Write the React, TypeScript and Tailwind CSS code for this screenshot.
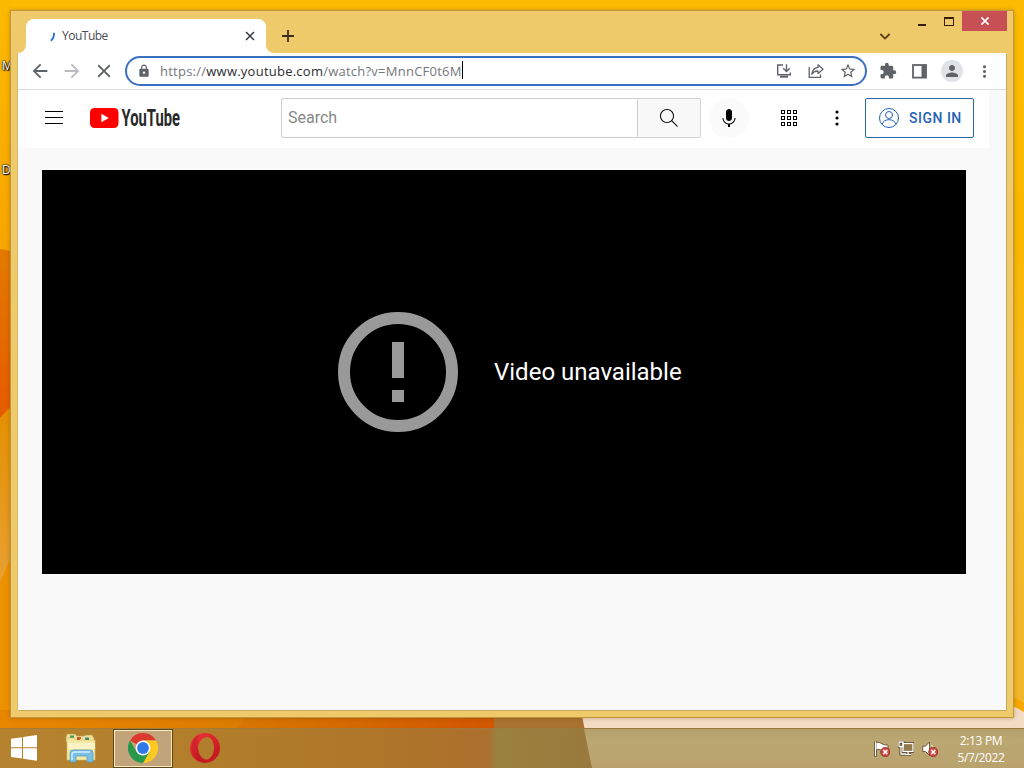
import React from 'react';
import {
  MdArrowBack,
  MdArrowForward,
  MdClose,
  MdExtension,
  MdLock,
  MdMoreVert,
  MdPerson,
  MdStarBorder,
} from 'react-icons/md';

const Wallpaper: React.FC = () => (
  <svg className="absolute inset-0" width="1024" height="768" viewBox="0 0 1024 768">
    <defs>
      <linearGradient id="sky" x1="0" y1="0" x2="0" y2="1">
        <stop offset="0" stopColor="#fdbc02" />
        <stop offset="0.3" stopColor="#fbb800" />
        <stop offset="0.6" stopColor="#f3bb2c" />
        <stop offset="1" stopColor="#f0b428" />
      </linearGradient>
      <linearGradient id="leftTop" x1="0" y1="0" x2="0" y2="1">
        <stop offset="0" stopColor="#fdba02" />
        <stop offset="1" stopColor="#f7a500" />
      </linearGradient>
      <linearGradient id="ember" x1="0" y1="0" x2="0" y2="1">
        <stop offset="0" stopColor="#e37a00" />
        <stop offset="1" stopColor="#e65a00" />
      </linearGradient>
      <linearGradient id="dune" x1="0" y1="0" x2="0" y2="1">
        <stop offset="0" stopColor="#e49000" />
        <stop offset="1" stopColor="#e9a136" />
      </linearGradient>
      <linearGradient id="floor" x1="0" y1="0" x2="1" y2="0">
        <stop offset="0" stopColor="#e88600" />
        <stop offset="0.5" stopColor="#da7c00" />
        <stop offset="1" stopColor="#d14c00" />
      </linearGradient>
    </defs>
    <rect width="1024" height="768" fill="url(#sky)" />
    <rect width="12" height="250" fill="url(#leftTop)" />
    <path d="M0 249L12 251V420H0Z" fill="url(#ember)" />
    <path d="M0 418L12 405V600H0Z" fill="url(#dune)" />
    <path d="M0 582L12 555V720H0Z" fill="#ee9100" />
    <rect y="710" width="494" height="58" fill="url(#floor)" />
    <path d="M247 717H494V768H200Z" fill="#d26a00" opacity="0.35" />
    <path d="M494 710H582L592 768H494Z" fill="#a97230" />
    <path d="M581 710L1013 704L1024 711V768H592Z" fill="#f3dcc4" />
    <path d="M1013 696L1024 703V712L1013 706Z" fill="#f6a800" />
  </svg>
);

const TabStrip: React.FC = () => (
  <div className="flex h-[42px]">
    <div className="relative mt-2 ml-2 flex h-[34px] w-[240px] items-center rounded-t-lg bg-white">
      <svg className="absolute -left-2 bottom-0" width="8" height="8" viewBox="0 0 8 8">
        <path d="M8 0V8H0A8 8 0 0 0 8 0Z" fill="#fff" />
      </svg>
      <svg className="absolute -right-2 bottom-0" width="8" height="8" viewBox="0 0 8 8">
        <path d="M0 0V8H8A8 8 0 0 1 0 0Z" fill="#fff" />
      </svg>
      <svg className="ml-6 shrink-0" width="6" height="12" viewBox="0 0 6 12">
        <path d="M4 1.8Q4.4 6.8 0.8 9.8" transform="translate(0 1)" fill="none" stroke="#2f6fd0" strokeWidth="1.8" />
      </svg>
      <span className="ml-1.5 text-[12px] tracking-[-0.5px] text-[#4a4d51]">YouTube</span>
      <svg className="mr-[11px] ml-auto shrink-0" width="10" height="10" viewBox="0 0 10 10">
        <path d="M1 1L9 9M9 1L1 9" stroke="#3c4043" strokeWidth="1.6" />
      </svg>
    </div>
    <svg className="mt-[19px] ml-4" width="12" height="12" viewBox="0 0 12 12">
      <path d="M6 0V12M0 6H12" stroke="#3b2f1c" strokeWidth="1.8" />
    </svg>
    <svg className="mt-[22px] ml-[585px]" width="12" height="8" viewBox="0 0 12 8">
      <path d="M1.4 1L6 5.6L10.6 1" fill="none" stroke="#5a3d16" strokeWidth="1.8" />
    </svg>
    <div className="-mr-px ml-auto flex h-5 items-center">
      <div className="mt-[7px] mr-[18px] h-[2px] w-2 bg-[#3a1d05]"></div>
      <div className="mr-[8px] h-[9px] w-[10px] border border-t-2 border-[#3a1d05]"></div>
      <div className="flex h-5 w-[45px] items-center justify-center bg-[#c75054]">
        <svg width="10" height="8" viewBox="0 0 10 8">
          <path d="M1.4 0.4L8.6 7.6M8.6 0.4L1.4 7.6" stroke="#fff" strokeWidth="1.7" />
        </svg>
      </div>
    </div>
  </div>
);

const Toolbar: React.FC = () => (
  <div className="flex h-[37px] items-center border-b border-[#dcdddf] bg-white text-[#5f6368]">
    <MdArrowBack className="ml-[11px]" size={22} />
    <MdArrowForward className="ml-[10px] text-[#b9bbbe]" size={22} />
    <MdClose className="ml-[10px]" size={22} />
    <div className="ml-[10px] flex h-[30px] w-[742px] items-center rounded-full border-2 border-[#3a70c1] bg-white">
      <MdLock className="ml-2.5" size={14} />
      <div className="mt-px ml-[9px] flex items-center text-[13px] tracking-[0.24px] whitespace-nowrap text-[#74777b]">
        <span>https://</span>
        <span className="text-[#2b2d31]">www.youtube.com</span>
        <span>/watch?v=MnnCF0t6M</span>
        <span className="-mt-1 h-[18px] w-px bg-black"></span>
      </div>
      <svg className="ml-auto" width="16" height="16" viewBox="0 0 16 16" fill="none" stroke="#5f6368" strokeWidth="1.4">
        <path d="M7 2H1.7V11.7H14.3V9.5" />
        <path d="M10.5 1.2V8M7.2 5.2L10.5 8.5L13.8 5.2" />
        <path d="M4 13.7H12" strokeWidth="2" />
      </svg>
      <svg className="ml-4" width="16" height="16" viewBox="0 0 16 16" fill="none" stroke="#5f6368" strokeWidth="1.3">
        <path d="M1.2 4V14.4H12.5V11.5" />
        <path d="M10 1.8L15 6.2L10 10.4V8C7 8 5 9 3.8 11.3C4.1 7.5 6 5 10 4.4Z" strokeLinejoin="round" />
      </svg>
      <MdStarBorder className="mr-2 ml-[15px]" size={18} />
    </div>
    <MdExtension className="ml-[12px]" size={18} />
    <svg className="ml-[15px]" width="15" height="15" viewBox="0 0 15 15">
      <rect x="1" y="1" width="13" height="12.6" fill="none" stroke="#5f6368" strokeWidth="1.8" />
      <rect x="9.5" y="1" width="4.5" height="12.6" fill="#5f6368" />
    </svg>
    <div className="ml-[14px] flex size-[22px] items-center justify-center rounded-full bg-[#dfe2e7]">
      <MdPerson size={18} />
    </div>
    <MdMoreVert className="ml-3" size={19} />
  </div>
);

const YouTubeHeader: React.FC = () => (
  <header className="flex h-[58px] w-[971px] items-center bg-white pb-0.5 font-[Roboto,sans-serif]">
    <svg className="ml-6" width="24" height="24" viewBox="0 0 24 24">
      <path d="M21 6H3V5h18v1zm0 5H3v1h18v-1zm0 6H3v1h18v-1z" fill="#030303" />
    </svg>
    <svg className="ml-6 overflow-visible" width="92" height="40" viewBox="0 0 92 40">
      <rect y="10" width="28.5" height="20" rx="4.5" fill="#f00" />
      <path d="M11.4 15.8L18.8 20L11.4 24.2Z" fill="#fff" />
      <text
        x="31.5"
        y="28.3"
        textLength="58.5"
        lengthAdjust="spacingAndGlyphs"
        fontFamily="Roboto, sans-serif"
        fontWeight="700"
        fontSize="23"
        fill="#282828"
      >
        YouTube
      </text>
    </svg>
    <div className="ml-[99px] flex h-10 w-[357px] items-center rounded-l-xs border border-[#ccc] pl-1.5 text-[16px] text-[#888]">
      Search
    </div>
    <div className="flex h-10 w-[63px] items-center justify-center rounded-r-xs border border-l-0 border-[#d3d3d3] bg-[#f8f8f8]">
      <svg width="24" height="24" viewBox="0 0 24 24">
        <path
          d="M20.87 20.17l-5.59-5.59C16.35 13.35 17 11.75 17 10c0-3.87-3.13-7-7-7s-7 3.13-7 7 3.13 7 7 7c1.75 0 3.35-.65 4.58-1.71l5.59 5.59.7-.71zM10 16c-3.31 0-6-2.69-6-6s2.69-6 6-6 6 2.69 6 6-2.69 6-6 6z"
          fill="#030303"
        />
      </svg>
    </div>
    <div className="ml-2 flex size-10 items-center justify-center rounded-full bg-[#fbfbfb]">
      <svg width="24" height="24" viewBox="0 0 24 24">
        <path
          d="M12 3c-1.66 0-3 1.37-3 3.07v5.86C9 13.63 10.34 15 12 15s3-1.37 3-3.07V6.07C15 4.37 13.66 3 12 3zm6.5 9h-1c0 3.03-2.47 5.5-5.5 5.5S6.5 15.03 6.5 12h-1c0 3.24 2.39 5.93 5.5 6.41V21h2v-2.59c3.11-.48 5.5-3.17 5.5-6.41z"
          fill="#030303"
        />
      </svg>
    </div>
    <svg className="ml-7" width="24" height="24" viewBox="0 0 24 24">
      {[4.5, 10.5, 16.5].map((y) =>
        [4.5, 10.5, 16.5].map((x) => (
          <rect key={`${x}-${y}`} x={x} y={y} width="3" height="3" fill="none" stroke="#030303" />
        ))
      )}
    </svg>
    <svg className="ml-6" width="24" height="24" viewBox="0 0 24 24" fill="#030303">
      <circle cx="12" cy="6" r="1.6" />
      <circle cx="12" cy="12" r="1.6" />
      <circle cx="12" cy="18" r="1.6" />
    </svg>
    <div className="ml-4 flex h-10 w-[109px] items-center rounded-xs border border-[#2a67ad] text-[#2463b5]">
      <svg className="ml-[11px]" width="24" height="24" viewBox="0 0 24 24" fill="none" stroke="#2463b5">
        <circle cx="12" cy="12" r="9.5" />
        <circle cx="12" cy="9" r="3.5" />
        <path d="M5 18.3C6 15.2 8.6 13.7 12 13.7S18 15.2 19 18.3" />
      </svg>
      <span className="ml-2 text-[14px] font-medium tracking-[0.5px] whitespace-nowrap">SIGN IN</span>
    </div>
  </header>
);

const Player: React.FC = () => (
  <div className="mt-[22px] ml-6 flex h-[404px] w-[924px] items-center bg-black">
    <svg className="ml-[296px]" width="120" height="120" viewBox="0 0 120 120">
      <circle cx="60" cy="60" r="54" fill="none" stroke="#999" strokeWidth="12" />
      <path d="M54 30H66V66H54ZM54 78H66V90H54Z" fill="#999" />
    </svg>
    <span className="ml-9 font-[Roboto,sans-serif] text-[24px] whitespace-nowrap text-white">Video unavailable</span>
  </div>
);

const ErrorBadge: React.FC = () => (
  <>
    <circle cx="11.3" cy="11" r="4.7" fill="#d2423c" stroke="#7a2c22" strokeWidth="0.6" />
    <path d="M9.2 8.9L13.4 13.1M13.4 8.9L9.2 13.1" stroke="#fff" strokeWidth="1.5" />
  </>
);

const Taskbar: React.FC = () => (
  <div className="relative mt-auto flex h-10 items-center border-t border-[#9b7c45]/60 bg-[linear-gradient(90deg,#b5832f_0,#b17d2b_240px,#ae7429_400px,#ad6f2e_488px,#9b8140_496px,#99793c_592px)] pb-px">
    {/* Lighter glass over the pale part of the wallpaper */}
    <svg className="absolute top-0 right-0" width="441" height="39" viewBox="0 0 441 39">
      <defs>
        <linearGradient id="glass" x1="0" y1="0" x2="0" y2="1">
          <stop offset="0" stopColor="#b5a06b" />
          <stop offset="0.3" stopColor="#bba772" />
          <stop offset="1" stopColor="#b9a26e" />
        </linearGradient>
      </defs>
      <path d="M1 0H441V39H9Z" fill="url(#glass)" />
    </svg>
    <svg className="ml-[11px]" width="26" height="26" viewBox="0 0 26 26" fill="#fff">
      <path d="M0 3.7L11 2.2V12.3H0ZM12 2L26 0V12.3H12ZM0 13.3H11V23.6L0 22.1ZM12 13.3H26V25.8L12 23.8Z" />
    </svg>
    <svg className="ml-7" width="32" height="30" viewBox="0 0 32 30">
      <path d="M1 4L2 1H10L12 3H19L21 2H27L29 5V9H1Z" fill="#f0df94" stroke="#b79a4c" strokeWidth="0.6" />
      <path d="M5 2.5H9V5H5Z" fill="#3f9a58" />
      <path d="M12 4H16V6H12Z" fill="#d36038" />
      <path d="M20 4.5H24V7H20Z" fill="#3d86b8" />
      <path d="M2 5H9L11 7H30V27H2Z" fill="#f4e7a1" stroke="#d9c377" strokeWidth="0.6" />
      <path d="M12 4.5H15V7H12Z" fill="#c9582f" />
      <path d="M21 5H24V7H21Z" fill="#3f8a58" />
      <path d="M3 10H30V16H3Z" fill="#fbf3c4" />
      <path d="M5 29V20Q5 17 8 17H25Q28 17 28 20V29H22V23H11V29Z" fill="#79bfe6" stroke="#4f9bc9" strokeWidth="0.7" />
      <path d="M7 27V21Q7 19 10 19H25" fill="none" stroke="#d2efff" strokeWidth="1.4" />
    </svg>
    <div className="ml-4 flex h-[39px] w-[60px] items-center justify-center border border-[#5b4520] bg-[#fbe9b8] p-px">
      <div className="flex size-full items-center justify-center bg-[#c2a47a]">
        <svg width="30" height="30" viewBox="0 0 30 30">
          <path d="M15 15L2 7.5A15 15 0 0 1 28 7.5H15Z" fill="#db3a2e" />
          <path d="M15 7.5H28A15 15 0 0 1 15 30L21.5 18.75Z" fill="#fcc921" />
          <path d="M2 7.5A15 15 0 0 0 15 30L21.5 18.75L15 15L8.5 18.75Z" fill="#28994a" />
          <circle cx="15" cy="15" r="7.4" fill="#fff" />
          <circle cx="15" cy="15" r="5.9" fill="#2f78e8" />
        </svg>
      </div>
    </div>
    <svg className="ml-[17px]" width="30" height="30" viewBox="0 0 30 30">
      <defs>
        <linearGradient id="opera" x1="0" y1="0" x2="1" y2="1">
          <stop offset="0" stopColor="#ee3a3e" />
          <stop offset="0.55" stopColor="#d91f28" />
          <stop offset="1" stopColor="#b5161e" />
        </linearGradient>
      </defs>
      <path
        d="M15 0A15 15 0 1 0 15 30A15 15 0 1 0 15 0ZM16 4.2C20.5 3.2 23.8 8 24 14S21 26.2 17 26.5S8.6 22 8.2 16S11.5 5 16 4.2Z"
        fill="url(#opera)"
        fillRule="evenodd"
      />
      <path d="M3 7Q5 3 9 2Q6 8 8 17Q10 25 17 29.6Q7 30 3 22Q0 15 3 7Z" fill="#a8121c" opacity="0.35" />
    </svg>
    <div className="relative mt-0.5 ml-auto flex gap-2">
      <svg width="16" height="16" viewBox="0 0 16 16">
        <path d="M1.5 0.5V15.5" stroke="#57431f" strokeWidth="3" />
        <path d="M2 1.5Q5 0.5 7.5 2.5T14 4V10Q10 11 7.5 9.3T2 9Z" fill="#fff" stroke="#57431f" strokeWidth="0.8" />
        <path d="M1.5 0.5V15" stroke="#fff" strokeWidth="1.3" />
        <ErrorBadge />
      </svg>
      <svg width="16" height="16" viewBox="0 0 16 16">
        <rect x="5" y="2.5" width="10" height="8" fill="none" stroke="#4d3b1c" strokeWidth="3" />
        <path d="M1 1H5V5.5H1ZM3 5V13H8M7 13.5H13M10 10V13" fill="none" stroke="#4d3b1c" strokeWidth="3" />
        <rect x="5" y="2.5" width="10" height="8" fill="#927a4c" stroke="#fff" strokeWidth="1.3" />
        <path d="M1 1H5V5.5H1ZM3 5V13H8M7 13.5H13M10 10V13" fill="none" stroke="#fff" strokeWidth="1.3" />
      </svg>
      <svg width="16" height="16" viewBox="0 0 16 16">
        <path d="M0.8 5.2H3.5L7.5 1V14.5L3.5 10.5H0.8Z" fill="#fff" stroke="#57431f" strokeWidth="0.8" />
        <path d="M9.5 4Q11 5 11 7" fill="none" stroke="#fff" />
        <ErrorBadge />
      </svg>
    </div>
    <div className="relative mt-0.5 mr-[18px] ml-[18px] w-[50px] text-center text-[12px] leading-[17px] tracking-[-0.35px] whitespace-nowrap text-white">
      <div>2:13 PM</div>
      <div>5/7/2022</div>
    </div>
  </div>
);

export default function App() {
  return (
    <div className="relative flex h-[768px] w-[1024px] flex-col overflow-hidden font-['Open_Sans','Noto_Sans',sans-serif]">
      <Wallpaper />
      {/* Desktop icon labels peeking out from behind the window */}
      <span className="absolute top-[58px] left-[2px] text-[12px] leading-4 text-white [text-shadow:1px_1px_1px_#000,0_0_2px_#000,0_0_2px_#000]">M</span>
      <span className="absolute top-[162px] left-[2px] text-[12px] leading-4 text-white [text-shadow:1px_1px_1px_#000,0_0_2px_#000,0_0_2px_#000]">D</span>

      <div className="relative mt-[10px] ml-[10px] flex h-[708px] w-[1004px] flex-col border border-[#c4953f] bg-[#eeca6b] px-[7px] pb-[7px] shadow-[0_0_4px_rgba(90,60,0,0.35)]">
        <TabStrip />
        <div className="flex grow flex-col bg-[#f9f9f9] shadow-[1px_1px_0_#c9a860,-1px_0_0_#d9b766]">
          <Toolbar />
          <YouTubeHeader />
          <Player />
        </div>
      </div>

      <Taskbar />
    </div>
  );
}
